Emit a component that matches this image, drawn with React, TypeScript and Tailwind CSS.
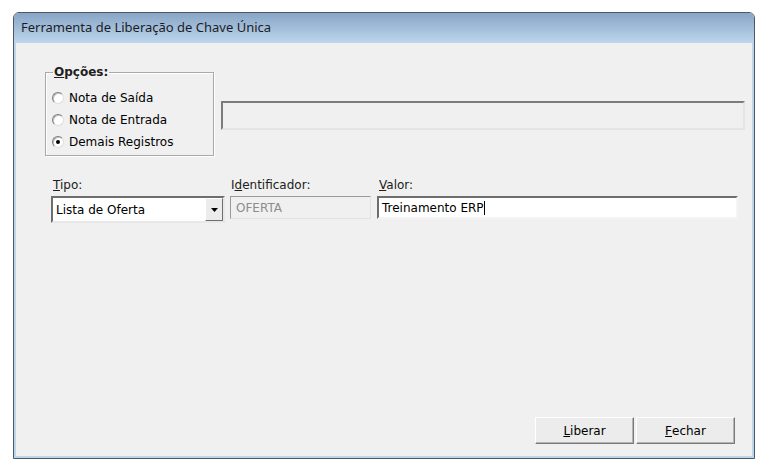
import React from 'react'

// -------------------------------------------------------
// Small classic-Windows pieces
// -------------------------------------------------------

const body = "font-['DejaVu_Sans',sans-serif] text-[12px] text-black"

function Radio({ label, checked }: { label: string; checked?: boolean }) {
    return (
        <div className="flex items-center h-[22px]">
            <span className="relative w-[12px] h-[12px] rounded-full bg-white border border-t-[#7a7a7a] border-l-[#7a7a7a] border-r-[#dedede] border-b-[#dedede] shadow-[inset_1px_1px_0_#c4c4c4] flex items-center justify-center shrink-0">
                {checked && <span className="w-[4px] h-[4px] rounded-full bg-black" />}
            </span>
            <span className="ml-[5px] leading-none">{label}</span>
        </div>
    )
}

function Label({ children, first }: { children: React.ReactNode; first: string }) {
    return (
        <div className="h-[14px] leading-[14px] pl-[2px] text-[#202020]">
            <span className="underline underline-offset-1">{first}</span>
            {children}
        </div>
    )
}

function Button({ first, rest }: { first: string; rest: string }) {
    return (
        <button className="w-[99px] h-[27px] bg-[#ececec] border border-t-white border-l-white border-r-[#7a7a7a] border-b-[#7a7a7a] shadow-[inset_-1px_-1px_0_#b4b4b4] flex items-center justify-center">
            <span className="underline underline-offset-1">{first}</span>
            {rest}
        </button>
    )
}

// -------------------------------------------------------
// Main component
// -------------------------------------------------------

export default function App() {
    return (
        <div className="w-[771px] h-[467px] bg-white pt-[12px] pl-[13px]">
            <div className="w-[742px] h-[447px] flex flex-col border border-[#4c5864] rounded-t-[6px] overflow-hidden">
                {/* Title bar */}
                <div className="h-[30px] shrink-0 flex items-center pl-[7px] bg-[linear-gradient(to_bottom,#88a5c6,#bcd6ec)] font-['Noto_Sans',sans-serif] text-[13px] text-[#1c1c28]">
                    Ferramenta de Liberação de Chave Única
                </div>

                {/* Frame + client */}
                <div className="flex-1 flex px-[2px] pb-[2px] bg-[#bcd6ec]">
                    <div className={`flex-1 flex flex-col bg-[#f0f0f0] ${body}`}>
                        {/* Row 1: options + status panel */}
                        <div className="flex items-start">
                            <fieldset className="ml-[29px] mt-[22px] w-[169px] h-[91px] border border-[#a9a9a9] shadow-[inset_1px_1px_0_#ffffff,1px_1px_0_#ffffff] pl-[6px] pt-[2px]">
                                <legend className="ml-[1px] px-[1px] font-bold leading-[14px] text-[#202020]">
                                    <span className="underline underline-offset-1">O</span>pções:
                                </legend>
                                <div className="flex flex-col pt-[6px]">
                                    <Radio label="Nota de Saída" />
                                    <Radio label="Nota de Entrada" />
                                    <Radio label="Demais Registros" checked />
                                </div>
                            </fieldset>
                            <div className="ml-[7px] mt-[58px] w-[524px] h-[29px] border-2 border-t-[#7c7c7c] border-l-[#7c7c7c] border-r-[#e4e4e4] border-b-[#e4e4e4]" />
                        </div>

                        {/* Row 2: tipo / identificador / valor */}
                        <div className="flex items-start mt-[22px] ml-[35px]">
                            <div className="flex flex-col">
                                <Label first="T">ipo:</Label>
                                <div className="mt-[4px] w-[174px] h-[27px] flex bg-white border-2 border-t-[#6e6e6e] border-l-[#6e6e6e] border-r-[#e8e8e8] border-b-[#e8e8e8]">
                                    <div className="flex-1 flex items-center pl-[3px]">Lista de Oferta</div>
                                    <div className="w-[18px] flex items-center justify-center bg-[#ececec] border border-t-white border-l-white border-r-[#6e6e6e] border-b-[#6e6e6e]">
                                        <svg width="7" height="4" viewBox="0 0 7 4">
                                            <path d="M0 0h7L3.5 4z" fill="#000" />
                                        </svg>
                                    </div>
                                </div>
                            </div>
                            <div className="flex flex-col ml-[5px]">
                                <div className="h-[14px] leading-[14px] pl-[1px] text-[#202020]">
                                    I<span className="underline underline-offset-1">d</span>entificador:
                                </div>
                                <div className="mt-[4px] w-[141px] h-[23px] flex items-center pl-[5px] bg-[#f0f0f0] border border-t-[#9a9a9a] border-l-[#9a9a9a] border-r-[#e2e2e2] border-b-[#e2e2e2] text-[#8c8c8c]">
                                    OFERTA
                                </div>
                            </div>
                            <div className="flex flex-col ml-[6px]">
                                <Label first="V">alor:</Label>
                                <div className="mt-[4px] w-[361px] h-[23px] flex items-center pl-[3px] bg-white border-2 border-t-[#6e6e6e] border-l-[#6e6e6e] border-r-[#f4f4f4] border-b-[#f4f4f4]">
                                    Treinamento ERP
                                    <span className="w-[1px] h-[14px] bg-black" />
                                </div>
                            </div>
                        </div>

                        {/* Buttons */}
                        <div className="flex-1" />
                        <div className="flex justify-end gap-[2px] pr-[17px] pb-[12px]">
                            <Button first="L" rest="iberar" />
                            <Button first="F" rest="echar" />
                        </div>
                    </div>
                </div>
            </div>
        </div>
    )
}
